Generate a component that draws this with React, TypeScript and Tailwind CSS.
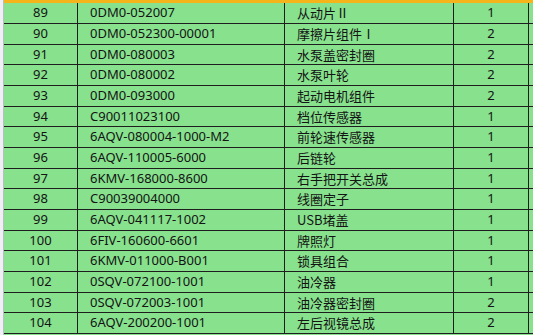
import React from "react";

const rows: [string, string, string, string][] = [
  ["89", "0DM0-052007", "从动片Ⅱ", "1"],
  ["90", "0DM0-052300-00001", "摩擦片组件Ⅰ", "2"],
  ["91", "0DM0-080003", "水泵盖密封圈", "2"],
  ["92", "0DM0-080002", "水泵叶轮", "2"],
  ["93", "0DM0-093000", "起动电机组件", "2"],
  ["94", "C90011023100", "档位传感器", "1"],
  ["95", "6AQV-080004-1000-M2", "前轮速传感器", "1"],
  ["96", "6AQV-110005-6000", "后链轮", "1"],
  ["97", "6KMV-168000-8600", "右手把开关总成", "1"],
  ["98", "C90039004000", "线圈定子", "1"],
  ["99", "6AQV-041117-1002", "USB堵盖", "1"],
  ["100", "6FIV-160600-6601", "牌照灯", "1"],
  ["101", "6KMV-011000-B001", "锁具组合", "1"],
  ["102", "0SQV-072100-1001", "油冷器", "1"],
  ["103", "0SQV-072003-1001", "油冷器密封圈", "2"],
  ["104", "6AQV-200200-1001", "左后视镜总成", "2"],
];

const heights = ["h-[21px]", "h-[21px]", "h-[20px]"];

export default function App() {
  return (
    <div
      className="w-[533px] h-[335px] overflow-hidden flex bg-white text-[13px] text-[#141414]"
      style={{ fontFamily: '"Noto Sans", "Noto Sans CJK SC", sans-serif' }}
    >
      <div className="w-[4px] shrink-0 bg-[#eef0f3] border-r border-[#b9bec6]" />
      <div className="flex-1 flex flex-col bg-[#87e18d]">
        <div className="h-[3px] shrink-0 bg-[#f5b41a]" />
        {rows.map((r, i) => (
          <div
            key={r[0]}
            className={`${heights[i % 3]} shrink-0 grid grid-cols-[74px_207px_169px_75px_1fr] border-b border-[#1e1e1e]`}
          >
            <div className="border-r border-[#1e1e1e] flex items-center justify-center">{r[0]}</div>
            <div className="border-r border-[#1e1e1e] flex items-center pl-[12px] whitespace-nowrap">{r[1]}</div>
            <div
              className="border-r border-[#1e1e1e] flex items-center pl-[12px] whitespace-nowrap"
              style={{ fontFamily: '"Noto Sans CJK SC", sans-serif' }}
            >
              {r[2]}
            </div>
            <div className="border-r border-[#1e1e1e] flex items-center justify-center">{r[3]}</div>
            <div />
          </div>
        ))}
      </div>
    </div>
  );
}
